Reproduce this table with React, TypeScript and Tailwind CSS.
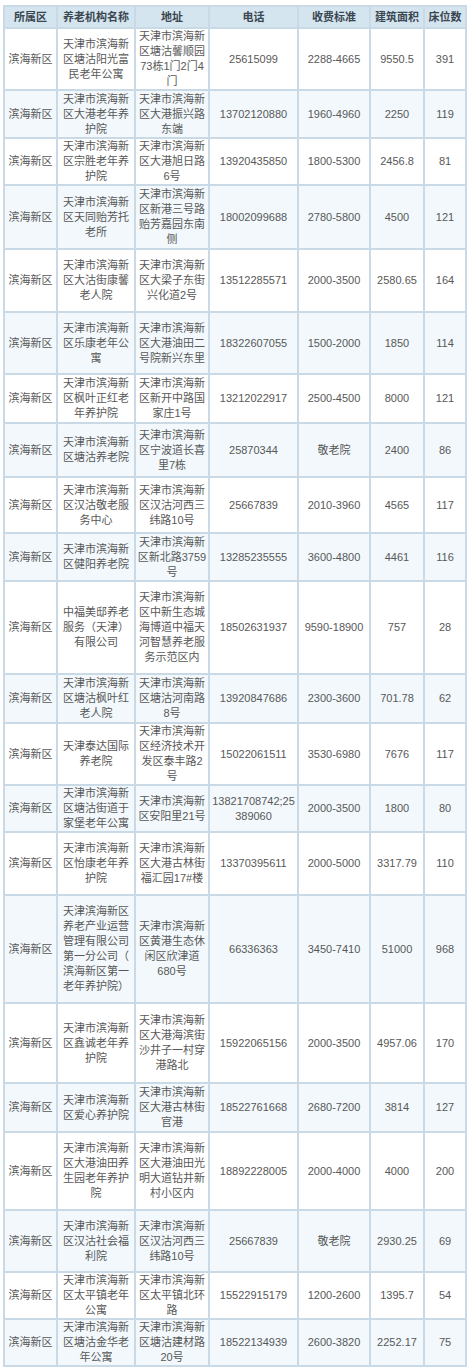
import React from "react";

type Row = {
  name: string[];
  addr: string[];
  phone: string[];
  fee: string;
  area: string;
  beds: string;
  h: number;
};

const rows: Row[] = [
  { name: ["天津市滨海新", "区塘沽阳光富", "民老年公寓"], addr: ["天津市滨海新", "区塘沽馨顺园", "73栋1门2门4", "门"], phone: ["25615099"], fee: "2288-4665", area: "9550.5", beds: "391", h: 62 },
  { name: ["天津市滨海新", "区大港老年养", "护院"], addr: ["天津市滨海新", "区大港振兴路", "东端"], phone: ["13702120880"], fee: "1960-4960", area: "2250", beds: "119", h: 48 },
  { name: ["天津市滨海新", "区宗胜老年养", "护院"], addr: ["天津市滨海新", "区大港旭日路", "6号"], phone: ["13920435850"], fee: "1800-5300", area: "2456.8", beds: "81", h: 46 },
  { name: ["天津市滨海新", "区天同贻芳托", "老所"], addr: ["天津市滨海新", "区新港三号路", "贻芳嘉园东南", "侧"], phone: ["18002099688"], fee: "2780-5800", area: "4500", beds: "121", h: 64 },
  { name: ["天津市滨海新", "区大沽街康馨", "老人院"], addr: ["天津市滨海新", "区大梁子东街", "兴化道2号"], phone: ["13512285571"], fee: "2000-3500", area: "2580.65", beds: "164", h: 63 },
  { name: ["天津市滨海新", "区乐康老年公", "寓"], addr: ["天津市滨海新", "区大港油田二", "号院新兴东里"], phone: ["18322607055"], fee: "1500-2000", area: "1850", beds: "114", h: 62 },
  { name: ["天津市滨海新", "区枫叶正红老", "年养护院"], addr: ["天津市滨海新", "区新开中路国", "家庄1号"], phone: ["13212022917"], fee: "2500-4500", area: "8000", beds: "121", h: 49 },
  { name: ["天津市滨海新", "区塘沽养老院"], addr: ["天津市滨海新", "区宁波道长喜", "里7栋"], phone: ["25870344"], fee: "敬老院", area: "2400", beds: "86", h: 54 },
  { name: ["天津市滨海新", "区汉沽敬老服", "务中心"], addr: ["天津市滨海新", "区汉沽河西三", "纬路10号"], phone: ["25667839"], fee: "2010-3960", area: "4565", beds: "117", h: 56 },
  { name: ["天津市滨海新", "区健阳养老院"], addr: ["天津市滨海新", "区新北路3759", "号"], phone: ["13285235555"], fee: "3600-4800", area: "4461", beds: "116", h: 48 },
  { name: ["中福美邸养老", "服务（天津）", "有限公司"], addr: ["天津市滨海新", "区中新生态城", "海博道中福天", "河智慧养老服", "务示范区内"], phone: ["18502631937"], fee: "9590-18900", area: "757", beds: "28", h: 93 },
  { name: ["天津市滨海新", "区塘沽枫叶红", "老人院"], addr: ["天津市滨海新", "区塘沽河南路", "8号"], phone: ["13920847686"], fee: "2300-3600", area: "701.78", beds: "62", h: 49 },
  { name: ["天津泰达国际", "养老院"], addr: ["天津市滨海新", "区经济技术开", "发区泰丰路2", "号"], phone: ["15022061511"], fee: "3530-6980", area: "7676", beds: "117", h: 62 },
  { name: ["天津市滨海新", "区塘沽街道于", "家堡老年公寓"], addr: ["天津市滨海新", "区安阳里21号"], phone: ["13821708742;25", "389060"], fee: "2000-3500", area: "1800", beds: "80", h: 47 },
  { name: ["天津市滨海新", "区怡康老年养", "护院"], addr: ["天津市滨海新", "区大港古林街", "福汇园17#楼"], phone: ["13370395611"], fee: "2000-5000", area: "3317.79", beds: "110", h: 63 },
  { name: ["天津滨海新区", "养老产业运营", "管理有限公司", "第一分公司（", "滨海新区第一", "老年养护院）"], addr: ["天津市滨海新", "区黄港生态休", "闲区欣津道", "680号"], phone: ["66336363"], fee: "3450-7410", area: "51000", beds: "968", h: 108 },
  { name: ["天津市滨海新", "区鑫诚老年养", "护院"], addr: ["天津市滨海新", "区大港海滨街", "沙井子一村穿", "港路北"], phone: ["15922065156"], fee: "2000-3500", area: "4957.06", beds: "170", h: 80 },
  { name: ["天津市滨海新", "区爱心养护院"], addr: ["天津市滨海新", "区大港古林街", "官港"], phone: ["18522761668"], fee: "2680-7200", area: "3814", beds: "127", h: 49 },
  { name: ["天津市滨海新", "区大港油田养", "生园老年养护", "院"], addr: ["天津市滨海新", "区大港油田光", "明大道钻井新", "村小区内"], phone: ["18892228005"], fee: "2000-4000", area: "4000", beds: "200", h: 78 },
  { name: ["天津市滨海新", "区汉沽社会福", "利院"], addr: ["天津市滨海新", "区汉沽河西三", "纬路10号"], phone: ["25667839"], fee: "敬老院", area: "2930.25", beds: "69", h: 62 },
  { name: ["天津市滨海新", "区太平镇老年", "公寓"], addr: ["天津市滨海新", "区太平镇北环", "路"], phone: ["15522915179"], fee: "1200-2600", area: "1395.7", beds: "54", h: 46 },
  { name: ["天津市滨海新", "区塘沽金华老", "年公寓"], addr: ["天津市滨海新", "区塘沽建材路", "20号"], phone: ["18522134939"], fee: "2600-3820", area: "2252.17", beds: "75", h: 47 },
];

const headers = ["所属区", "养老机构名称", "地址", "电话", "收费标准", "建筑面积", "床位数"];

function Lines({ lines }: { lines: string[] }) {
  return (
    <>
      {lines.map((l, i) => (
        <div key={i} className="whitespace-nowrap">
          {l}
        </div>
      ))}
    </>
  );
}

const td = "border-2 border-[#c9d9e6] p-0 text-center align-middle";

export default function App() {
  return (
    <div className="bg-white w-[467px] h-[1367px] overflow-hidden pt-[5px] font-['Liberation_Sans','Noto_Sans_CJK_SC',sans-serif] text-[11px] leading-[15px] text-[#585858]">
      <table className="ml-[3px] w-[464px] table-fixed border-collapse">
        <colgroup>
          <col className="w-[53px]" />
          <col className="w-[78px]" />
          <col className="w-[74px]" />
          <col className="w-[89px]" />
          <col className="w-[72px]" />
          <col className="w-[54px]" />
          <col className="w-[42px]" />
        </colgroup>
        <thead>
          <tr className="h-[22px] bg-[#d4e5ef]">
            {headers.map((h) => (
              <th key={h} className={`${td} font-bold text-[#3b4650] whitespace-nowrap`}>
                {h}
              </th>
            ))}
          </tr>
        </thead>
        <tbody>
          {rows.map((r, i) => (
            <tr key={i} className={i % 2 === 0 ? "bg-white" : "bg-[#f2f8fc]"} style={{ height: r.h }}>
              <td className={td}>滨海新区</td>
              <td className={td}>
                <Lines lines={r.name} />
              </td>
              <td className={td}>
                <Lines lines={r.addr} />
              </td>
              <td className={td}>
                <Lines lines={r.phone} />
              </td>
              <td className={td}>{r.fee}</td>
              <td className={td}>{r.area}</td>
              <td className={td}>{r.beds}</td>
            </tr>
          ))}
        </tbody>
      </table>
    </div>
  );
}
